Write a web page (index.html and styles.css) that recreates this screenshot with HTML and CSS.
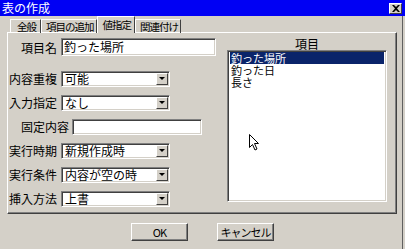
FILE: index.html
```html
<!DOCTYPE html>
<html lang="ja">

<head>
    <meta charset="UTF-8">
    <title>表の作成</title>
    <link rel="stylesheet" href="styles.css">
</head>

<body>
    <div class="window">
        <div class="titlebar">
            <span class="title">表の作成</span>
            <span class="close">
                <svg width="8" height="7" viewBox="0 0 8 7">
                    <path d="M0 0h2l2 2 2-2h2L5 3.5 8 7H6L4 5 2 7H0l3-3.5z" fill="#000"/>
                </svg>
            </span>
        </div>

        <div class="client">
            <div class="tabs">
                <div class="tab first">全般</div>
                <div class="tab">項目の追加</div>
                <div class="tab active">値指定</div>
                <div class="tab">関連付け</div>
            </div>

            <div class="panel">
                <div class="form">
                    <div class="row first">
                        <span class="label">項目名</span>
                        <div class="edit name">釣った場所</div>
                    </div>
                    <div class="row gap">
                        <span class="label">内容重複</span>
                        <div class="combo"><span class="value">可能</span><span class="drop"></span></div>
                    </div>
                    <div class="row">
                        <span class="label">入力指定</span>
                        <div class="combo"><span class="value">なし</span><span class="drop"></span></div>
                    </div>
                    <div class="row">
                        <span class="label long">固定内容</span>
                        <div class="edit fixed"></div>
                    </div>
                    <div class="row">
                        <span class="label">実行時期</span>
                        <div class="combo"><span class="value">新規作成時</span><span class="drop"></span></div>
                    </div>
                    <div class="row">
                        <span class="label">実行条件</span>
                        <div class="combo"><span class="value">内容が空の時</span><span class="drop"></span></div>
                    </div>
                    <div class="row">
                        <span class="label">挿入方法</span>
                        <div class="combo"><span class="value">上書</span><span class="drop"></span></div>
                    </div>
                </div>

                <div class="items">
                    <div class="items-head">項目</div>
                    <div class="listbox">
                        <div class="item selected">釣った場所</div>
                        <div class="item">釣った日</div>
                        <div class="item">長さ</div>
                        <svg class="cursor" width="11" height="17" viewBox="0 0 11 17">
                            <path d="M0.5 0.5v13l3-3 2.5 5.5 2-1-2.5-5.5h4z" fill="#fff" stroke="#000"/>
                        </svg>
                    </div>
                </div>
            </div>

            <div class="buttons">
                <button>OK</button>
                <button>キャンセル</button>
            </div>
        </div>
    </div>
</body>

</html>
```

FILE: styles.css
```css
body {
    margin: 0;
    font-family: "Noto Sans CJK JP", "Liberation Sans", sans-serif;
    font-size: 12px;
    color: #000;
}

.window {
    width: 405px;
    height: 249px;
    background-color: #d4d0c8;
    box-shadow: inset -2px 0 0 #d4d0c8, inset -3px 0 0 #606060;
    overflow: hidden;
}

.titlebar {
    height: 16px;
    background-color: #0000f4;
    display: flex;
    align-items: center;
    justify-content: space-between;
    padding: 0 3px 0 2px;
}

.title {
    color: white;
    font-size: 12px;
    line-height: 16px;
}

.close {
    width: 11px;
    height: 9px;
    background-color: #d4d0c8;
    border: 1px solid;
    border-color: #fff #404040 #404040 #fff;
    display: flex;
    align-items: center;
    justify-content: center;
}

.tabs {
    display: flex;
    align-items: flex-end;
    height: 16px;
    padding-left: 10px;
    position: relative;
    z-index: 1;
}

.tab {
    height: 13px;
    line-height: 13px;
    font-size: 10.5px;
    letter-spacing: -1px;
    padding: 0 2px 0 4px;
    border-top: 1px solid #fff;
    border-left: 1px solid #fff;
    border-right: 1px solid #404040;
    margin-bottom: -1px;
    white-space: nowrap;
}

.tab.first {
    padding: 0 4px 0 6px;
}

.tab.active {
    height: 16px;
    line-height: 15px;
    padding: 0 3px 0 5px;
    background-color: #d4d0c8;
}

.panel {
    margin-left: 7px;
    width: 388px;
    height: 180px;
    border: 1px solid;
    border-color: #fff #404040 #404040 #fff;
    box-shadow: inset -1px -1px 0 #808080;
    display: flex;
}

.form {
    margin-left: -6px;
    width: 214px;
    display: flex;
    flex-direction: column;
}

.row {
    display: flex;
    align-items: center;
    margin-top: 7px;
}

.row.first {
    margin-top: 5px;
}

.row.gap {
    margin-top: 14px;
}

.label {
    width: 55px;
    margin-right: 4px;
    text-align: right;
    white-space: nowrap;
}

.label.long {
    width: 67px;
    margin-right: 3px;
}

.edit,
.combo {
    box-sizing: border-box;
    height: 16px;
    background-color: white;
    border: 1px solid;
    border-color: #808080 #fff #fff #808080;
    box-shadow: inset 1px 1px 0 #404040, inset -1px -1px 0 #d4d0c8;
    padding: 0 2px;
    line-height: 14px;
    white-space: nowrap;
}

.edit.name {
    width: 155px;
    height: 18px;
    line-height: 16px;
}

.edit.fixed {
    width: 130px;
}

.combo {
    width: 109px;
    display: flex;
    justify-content: space-between;
    padding: 1px;
}

.value {
    padding-left: 2px;
    line-height: 12px;
}

.drop {
    box-sizing: border-box;
    width: 12px;
    height: 12px;
    background-color: #d4d0c8;
    border: 1px solid;
    border-color: #fff #404040 #404040 #fff;
    display: flex;
    align-items: center;
    justify-content: center;
}

.drop::after {
    content: "";
    border-left: 3px solid transparent;
    border-right: 3px solid transparent;
    border-top: 3px solid #000;
}

.items {
    margin-left: 11px;
    width: 160px;
    display: flex;
    flex-direction: column;
}

.items-head {
    text-align: center;
    height: 12px;
    line-height: 12px;
    margin-top: 5px;
}

.listbox {
    position: relative;
    box-sizing: border-box;
    height: 152px;
    background-color: white;
    border: 1px solid;
    border-color: #808080 #fff #fff #808080;
    box-shadow: inset 1px 1px 0 #404040, inset -1px -1px 0 #d4d0c8;
    padding: 1px 2px 0;
}

.item {
    height: 12px;
    line-height: 12px;
    font-size: 11px;
    padding-left: 1px;
    white-space: nowrap;
}

.item.selected {
    background-color: #0a246a;
    color: white;
}

.cursor {
    position: absolute;
    left: 21px;
    top: 83px;
}

.buttons {
    display: flex;
    justify-content: center;
    gap: 29px;
    margin-top: 9px;
}

button {
    box-sizing: border-box;
    width: 57px;
    height: 18px;
    padding: 0;
    font-family: inherit;
    font-size: 11px;
    letter-spacing: -1px;
    line-height: 14px;
    white-space: nowrap;
    background-color: #d4d0c8;
    border: 1px solid;
    border-color: #fff #404040 #404040 #fff;
    box-shadow: inset -1px -1px 0 #808080;
}
```
